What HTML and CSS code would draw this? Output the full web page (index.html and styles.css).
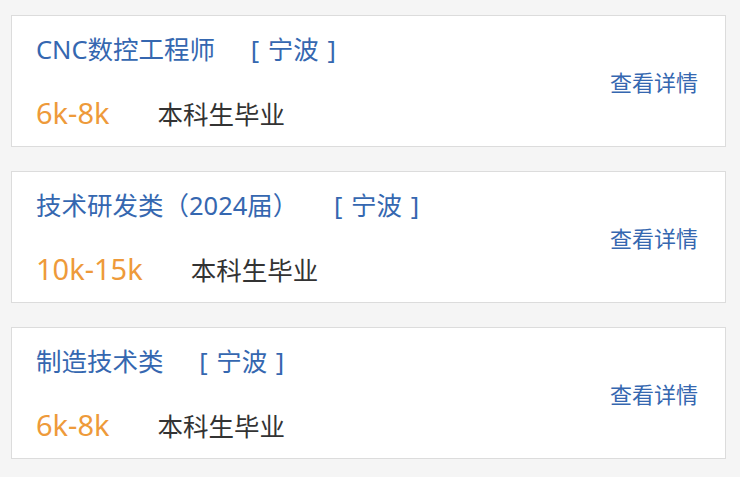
FILE: index.html
```html
<!DOCTYPE html>
<html lang="zh-CN">
<head>
  <meta charset="UTF-8">
  <meta name="viewport" content="width=device-width, initial-scale=1.0">
  <title>招聘职位</title>
  <link rel="stylesheet" href="styles.css">
</head>
<body>

  <ul class="job-list">
    <li class="job-item">
      <div class="job-info">
        <p class="job-title">
          <span class="job-name">CNC数控工程师</span>
          <span class="job-city">[ 宁波 ]</span>
        </p>
        <p class="job-meta">
          <span class="job-salary">6k-8k</span>
          <span class="job-degree">本科生毕业</span>
        </p>
      </div>
      <a href="#" class="link-detail">查看详情</a>
    </li>
    <li class="job-item">
      <div class="job-info">
        <p class="job-title">
          <span class="job-name">技术研发类（2024届）</span>
          <span class="job-city">[ 宁波 ]</span>
        </p>
        <p class="job-meta">
          <span class="job-salary">10k-15k</span>
          <span class="job-degree">本科生毕业</span>
        </p>
      </div>
      <a href="#" class="link-detail">查看详情</a>
    </li>
    <li class="job-item">
      <div class="job-info">
        <p class="job-title">
          <span class="job-name">制造技术类</span>
          <span class="job-city">[ 宁波 ]</span>
        </p>
        <p class="job-meta">
          <span class="job-salary">6k-8k</span>
          <span class="job-degree">本科生毕业</span>
        </p>
      </div>
      <a href="#" class="link-detail">查看详情</a>
    </li>
  </ul>

</body>
</html>
```

FILE: styles.css
```css
/* 초기화 */
* {
  padding: 0;
  margin: 0;
  box-sizing: border-box;
}
ul, li {
  list-style-type: none;
}
a {
  text-decoration: none;
}

body {
  background-color: #F5F5F5;
  font-family: "Noto Sans", "Noto Sans CJK SC", sans-serif;
  color: #333;
}

/* 职位 목록 */
.job-list {
  display: flex;
  flex-direction: column;
  gap: 24px;
  padding: 15px 14px 0 11px;
}
.job-item {
  display: flex;
  align-items: center;
  height: 132px;
  padding: 0 27px 0 24px;
  background-color: #FFFFFF;
  border: 1px solid #DCDCDC;
}
.job-info {
  flex: 1;
  display: flex;
  flex-direction: column;
  gap: 30px;
  padding-top: 1px;
}

.job-title {
  line-height: 34px;
  font-size: 25.5px;
  color: #3567B0;
}
.job-city {
  margin-left: 29px;
  word-spacing: 2px;
}

.job-meta {
  display: flex;
  align-items: baseline;
  line-height: 34px;
  font-size: 25.5px;
}
.job-salary {
  font-size: 29px;      /* 숫자는 조금 크게 */
  color: #EE9A3A;
}
.job-degree {
  margin-left: 48px;
  color: #333;
}

.link-detail {
  font-size: 22px;
  color: #3567B0;
}
```
